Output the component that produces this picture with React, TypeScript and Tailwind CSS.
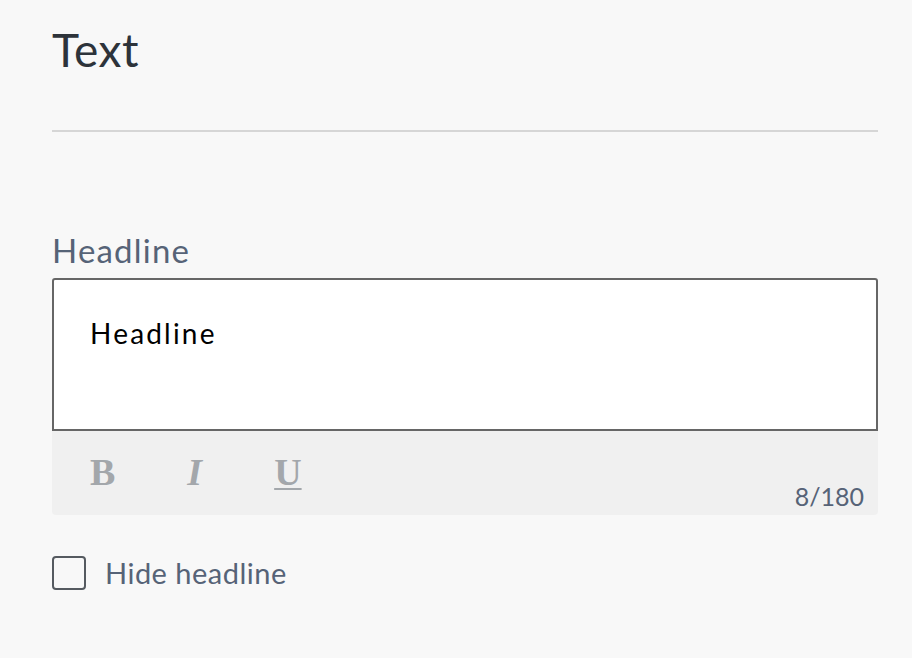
import React, { useState } from "react";

export default function App() {
  const [text, setText] = useState("Headline");
  const [hidden, setHidden] = useState(false);

  return (
    <div className="min-h-screen bg-[#f8f8f8] pl-[52px] pt-[22px] pr-[34px] font-['Lato','Noto_Sans',sans-serif]">
      <h1 className="text-[46px] leading-[56px] tracking-[0.5px] text-[#2d333a]">Text</h1>
      <div className="mt-[52px] h-[2px] bg-[#d6d6d6]" />

      <div className="mt-[98px]">
        <label className="block text-[33px] leading-[40px] tracking-[1.2px] text-[#566377]">Headline</label>
        <div className="mt-[8px]">
          <div className="h-[153px] rounded-t-[3px] border-2 border-[#666666] bg-white px-[36px] pt-[26px]">
            <input
              value={text}
              onChange={(e) => setText(e.target.value)}
              className="w-full bg-transparent text-[28px] leading-[54px] tracking-[2.2px] text-black outline-none"
            />
          </div>
          <div className="flex h-[84px] items-start justify-between rounded-b-[4px] bg-[#f0f0f0] pl-[38px] pr-[14px]">
            <div className="flex items-center gap-[72px] pt-[19px] font-['Liberation_Serif',serif] text-[38px] font-bold leading-[44px] text-[#a3a7ab]">
              <span>B</span>
              <span className="italic">I</span>
              <span className="underline decoration-2 underline-offset-[3px]">U</span>
            </div>
            <span className="self-end pb-[1px] text-[25px] leading-[36px] text-[#566377]">
              {text.length}/180
            </span>
          </div>
        </div>

        <label className="mt-[40px] flex cursor-pointer items-center gap-[19px]">
          <span className="flex h-[34px] w-[34px] items-center justify-center rounded-[4px] border-2 border-[#555a60]">
            {hidden && (
              <svg viewBox="0 0 24 24" className="h-6 w-6" fill="none" stroke="#555a60" strokeWidth="3">
                <path d="M5 12l5 5 9-10" />
              </svg>
            )}
          </span>
          <input type="checkbox" className="hidden" checked={hidden} onChange={() => setHidden(!hidden)} />
          <span className="text-[29px] leading-[36px] tracking-[0.5px] text-[#566377]">Hide headline</span>
        </label>
      </div>
    </div>
  );
}
